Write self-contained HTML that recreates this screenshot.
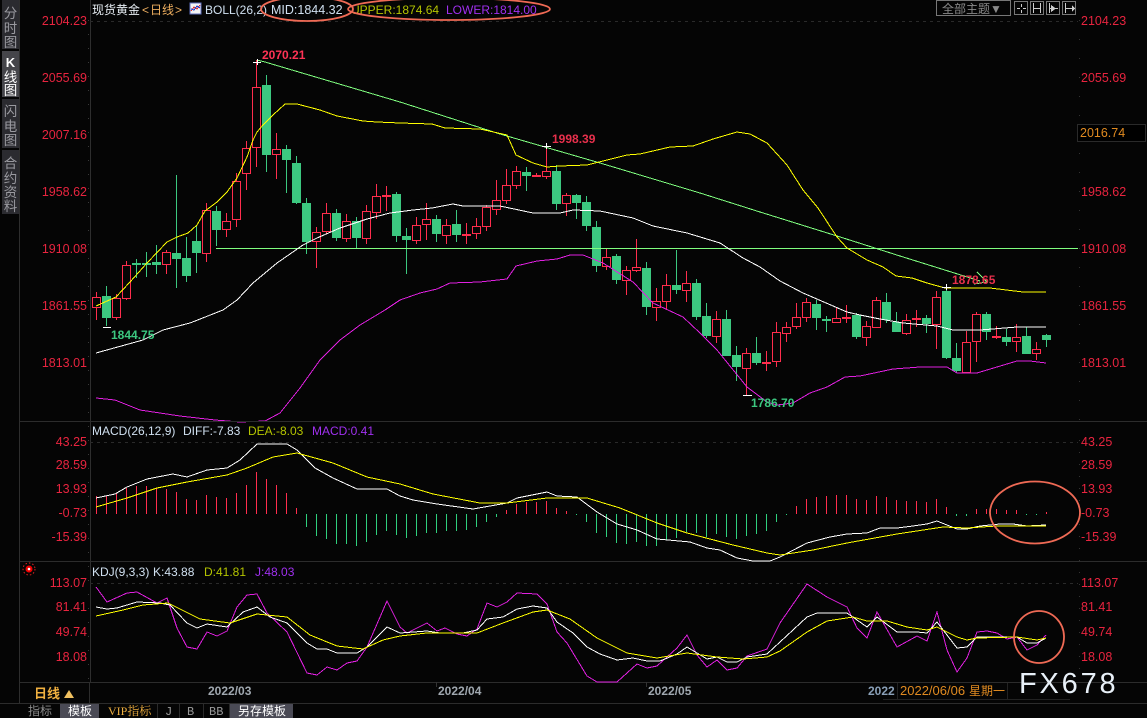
<!DOCTYPE html>
<html lang="zh">
<head>
<meta charset="utf-8">
<title>现货黄金 日线</title>
<style>
html,body{margin:0;padding:0;background:#050505;width:1147px;height:718px;overflow:hidden}
svg{display:block}
text{font-family:"Liberation Sans","Noto Sans CJK SC",sans-serif;font-size:12.5px}
.ax text{fill:#e8243f}
.c{shape-rendering:crispEdges}
</style>
</head>
<body>
<svg width="1147" height="718" viewBox="0 0 1147 718" xmlns="http://www.w3.org/2000/svg">
<rect width="1147" height="718" fill="#050505"/>

<!-- sidebar -->
<g class="c">
<rect x="2" y="0" width="17" height="49" fill="#2b2b30"/>
<rect x="2" y="51" width="17" height="46" fill="#45454a"/>
<rect x="2" y="99" width="17" height="49" fill="#2b2b30"/>
<rect x="2" y="150" width="17" height="64" fill="#2b2b30"/>
<path d="M19.5 0V703M90.5 0V682" stroke="#2e2e2e" fill="none"/>
<path d="M20 421.5H1147M20 561.5H1147M20 682.5H1147M0 703.5H1147M89.5 682V703" stroke="#2c2c2c" fill="none"/>
<path d="M88.5 20V682" stroke="#3a3a3a" stroke-dasharray="1 13" fill="none"/>
<path d="M1079.5 20V420" stroke="#333" stroke-dasharray="1 18" fill="none"/>
<path d="M1079.5 440V680" stroke="#333" stroke-dasharray="1 11" fill="none"/>
<path d="M90 21.5H1078M90 442.5H1078M90 583.5H1078" stroke="#2a2a2a" stroke-dasharray="3 4" fill="none"/>
<path d="M436.5 682V687M646.5 682V687" stroke="#333" fill="none"/>
</g>
<g fill="#9a9aa0" text-anchor="middle">
<text x="10.5" y="18" style="font-size:13.5px">分</text><text x="10.5" y="33" style="font-size:13.5px">时</text><text x="10.5" y="47" style="font-size:13.5px">图</text>
<text x="10.5" y="67" fill="#fff" style="font-size:13px;font-weight:bold">K</text><text x="10.5" y="82" fill="#fff" style="font-size:13.5px">线</text><text x="10.5" y="95" fill="#fff" style="font-size:13.5px">图</text>
<text x="10.5" y="116" style="font-size:13.5px">闪</text><text x="10.5" y="131" style="font-size:13.5px">电</text><text x="10.5" y="145" style="font-size:13.5px">图</text>
<text x="10.5" y="168" style="font-size:13.5px">合</text><text x="10.5" y="183" style="font-size:13.5px">约</text><text x="10.5" y="197" style="font-size:13.5px">资</text><text x="10.5" y="211" style="font-size:13.5px">料</text>
</g>

<!-- candles green -->
<g class="c">
<path stroke="#3cc880" fill="none" d="M106.5 286V326M136.5 259V278M146.5 252V277M156.5 245V274M176.5 175V288M186.5 237V282M196.5 226V273M216.5 206V246M266.5 75V172M286.5 145V193M296.5 156V204M306.5 198V254M336.5 209V241M356.5 217V248M396.5 192V242M406.5 228V274M436.5 215V242M456.5 210V242M526.5 167V191M556.5 165V210M576.5 194V219M586.5 196V231M596.5 221V272M616.5 254V284M646.5 262V315M676.5 250V294M696.5 279V320M706.5 303V338M726.5 310V356M736.5 346V381M756.5 337V365M816.5 300V330M826.5 316V332M856.5 313V339M886.5 293V323M896.5 312V332M926.5 315V333M946.5 287V359M956.5 343V373M986.5 312V340M1006.5 329V346M1026.5 327V354M1046.5 334V347"/>
<path fill="#3cc880" d="M102 296h9v22h-9zM132 263h9v2h-9zM142 263h9v2h-9zM152 262h9v3h-9zM172 253h9v6h-9zM182 258h9v18h-9zM192 241h9v12h-9zM212 211h9v19h-9zM262 85h9v70h-9zM282 149h9v11h-9zM292 163h9v40h-9zM302 203h9v39h-9zM332 213h9v25h-9zM352 221h9v17h-9zM392 194h9v42h-9zM402 236h9v4h-9zM432 219h9v15h-9zM452 224h9v11h-9zM522 172h9v4h-9zM552 171h9v33h-9zM572 195h9v8h-9zM582 202h9v24h-9zM592 227h9v39h-9zM612 256h9v24h-9zM642 268h9v39h-9zM672 285h9v5h-9zM692 283h9v34h-9zM702 316h9v20h-9zM722 319h9v37h-9zM732 355h9v12h-9zM752 353h9v10h-9zM812 304h9v14h-9zM822 319h9v2h-9zM852 315h9v22h-9zM882 302h9v18h-9zM892 322h9v10h-9zM922 318h9v6h-9zM942 291h9v67h-9zM952 358h9v13h-9zM982 314h9v18h-9zM1002 337h9v5h-9zM1022 336h9v18h-9zM1042 335h9v5h-9z"/>

<!-- candles red -->
<path stroke="#ff2d4d" fill="none" d="M96.5 292V320M116.5 294V320M126.5 261V300M166.5 250V274M206.5 203V262M226.5 213V237M236.5 173V227M246.5 141V190M256.5 60V167M276.5 133V179M316.5 227V268M326.5 203V234M346.5 214V242M366.5 205V244M376.5 184V219M386.5 186V211M416.5 217V244M426.5 203V240M446.5 219V244M466.5 223V244M476.5 218V239M486.5 205V231M496.5 180V215M506.5 169V204M516.5 166V189M536.5 173V177M546.5 146V179M566.5 193V216M606.5 249V270M626.5 266V295M636.5 239V272M656.5 288V321M666.5 274V310M686.5 271V302M716.5 311V343M746.5 348V395M766.5 351V371M776.5 322V367M786.5 322V342M796.5 303V329M806.5 298V322M836.5 308V323M846.5 305V323M866.5 321V346M876.5 297V328M906.5 314V335M916.5 310V327M936.5 291V349M966.5 331V372M976.5 312V362M996.5 326V339M1016.5 324V352M1036.5 342V360"/>
<path stroke="#ff2d4d" fill="#050505" d="M92.5 297.5h8v10h-8zM112.5 298.5h8v19h-8zM122.5 265.5h8v33h-8zM162.5 252.5h8v12h-8zM202.5 210.5h8v43h-8zM222.5 221.5h8v8h-8zM232.5 181.5h8v38h-8zM242.5 148.5h8v25h-8zM252.5 87.5h8v60h-8zM272.5 149.5h8v5h-8zM312.5 232.5h8v9h-8zM322.5 213.5h8v18h-8zM342.5 221.5h8v17h-8zM362.5 211.5h8v27h-8zM372.5 196.5h8v16h-8zM382.5 195.5h8v1h-8zM412.5 225.5h8v15h-8zM422.5 219.5h8v5h-8zM442.5 225.5h8v10h-8zM462.5 234.5h8v1h-8zM472.5 226.5h8v7h-8zM482.5 207.5h8v19h-8zM492.5 200.5h8v9h-8zM502.5 185.5h8v15h-8zM512.5 171.5h8v14h-8zM532.5 175.5h8v1h-8zM542.5 171.5h8v5h-8zM562.5 195.5h8v8h-8zM602.5 257.5h8v9h-8zM622.5 270.5h8v10h-8zM632.5 267.5h8v3h-8zM652.5 301.5h8v6h-8zM662.5 285.5h8v16h-8zM682.5 283.5h8v7h-8zM712.5 319.5h8v17h-8zM742.5 353.5h8v15h-8zM762.5 362.5h8v1h-8zM772.5 332.5h8v29h-8zM782.5 327.5h8v6h-8zM792.5 317.5h8v9h-8zM802.5 302.5h8v15h-8zM832.5 318.5h8v4h-8zM842.5 317.5h8v1h-8zM862.5 326.5h8v11h-8zM872.5 300.5h8v27h-8zM902.5 320.5h8v13h-8zM912.5 318.5h8v1h-8zM932.5 297.5h8v27h-8zM962.5 342.5h8v30h-8zM972.5 314.5h8v27h-8zM992.5 336.5h8v1h-8zM1012.5 337.5h8v4h-8zM1032.5 349.5h8v4h-8z"/>

<!-- main lines -->
<path stroke="#80ff80" fill="none" d="M216 248.5H1078"/>
<polyline stroke="#80ff80" fill="none" points="257,60 265,62 400,102 500,134 600,163 700,193 760,212 837,236 900,256 980,281"/>
<path stroke="#80ff80" fill="none" d="M977 272L987 282L974 284"/>
<polyline stroke="#ffff00" fill="none" points="96,306 116,297 130,282 147,263 167,242 177,237 188,233 197,225 205,211 217,202 227,192 237,178 247,157 253,140 257,132 263,125 273,115 285,104 297,104 320,110 337,116 363,121 377,122 400,123 432,124 445,128 480,129 507,135 516,155 533,163 547,167 560,166 587,165 607,160 627,155 640,154 670,147 693,146 713,139 737,132 750,134 767,143 787,165 803,190 818,208 837,237 847,248 867,260 883,267 896,276 912,278 927,283 945,288 990,288 1023,292 1046,292"/>
<polyline stroke="#ffffff" fill="none" points="96,353 143,340 163,330 190,323 223,310 237,300 253,283 277,263 303,245 317,238 340,228 367,219 390,213 413,210 432,208 453,204 463,206 500,206 533,213 560,213 573,210 600,211 633,218 653,226 687,233 720,243 743,258 760,267 780,281 803,293 847,312 860,315 880,319 903,323 937,326 953,330 980,330 1017,327 1046,327"/>
<polyline stroke="#e020e0" fill="none" points="96,398 115,400 140,410 180,416 215,420 240,422 265,421 280,413 300,388 320,360 340,340 360,325 385,310 400,300 420,293 437,289 450,283 480,282 507,279 516,266 537,261 557,259 570,255 583,255 603,263 633,282 653,303 683,317 700,333 717,350 747,387 767,402 777,405 793,403 810,393 827,387 845,377 860,376 893,369 920,367 947,367 957,373 977,373 997,367 1017,361 1030,361 1046,363"/>
<rect x="20" y="421" width="1127" height="1" fill="#2c2c2c"/>

<!-- crosshair marks -->
<path stroke="#fff" fill="none" d="M253 62.5h8M257.5 59v6M542 146.5h9M546.5 143v6M942 287.5h9M946.5 284v6M103 327.5h8M743 395.5h9"/>

<!-- MACD bars -->
<path stroke="#ff2d4d" fill="none" d="M96.5 496V514M106.5 496V514M116.5 493V514M126.5 488V514M136.5 486V514M146.5 486V514M156.5 488V514M166.5 489V514M176.5 492V514M186.5 499V514M196.5 500V514M206.5 495V514M216.5 497V514M226.5 498V514M236.5 493V514M246.5 485V514M256.5 472V514M266.5 479V514M276.5 485V514M286.5 493V514M296.5 508V514M506.5 510V514M516.5 504V514M526.5 502V514M536.5 502V514M546.5 501V514M556.5 508V514M566.5 511V514M796.5 506V514M806.5 499V514M816.5 497V514M826.5 496V514M836.5 495V514M846.5 495V514M856.5 499V514M866.5 500V514M876.5 496V514M886.5 497V514M896.5 500V514M906.5 501V514M916.5 501V514M926.5 502V514M936.5 499V514M946.5 507V514M976.5 509V514M986.5 509V514M996.5 509V514M1006.5 510V514M1016.5 510V514M1046.5 512V514"/>
<path stroke="#2fd07e" fill="none" d="M306.5 514V527M316.5 514V536M326.5 514V539M336.5 514V544M346.5 514V544M356.5 514V546M366.5 514V542M376.5 514V535M386.5 514V531M396.5 514V535M406.5 514V538M416.5 514V536M426.5 514V533M436.5 514V533M446.5 514V531M456.5 514V531M466.5 514V530M476.5 514V527M486.5 514V522M496.5 514V517M576.5 514V515M586.5 514V522M596.5 514V533M606.5 514V537M616.5 514V543M626.5 514V544M636.5 514V542M646.5 514V546M656.5 514V546M666.5 514V540M676.5 514V538M686.5 514V532M696.5 514V533M706.5 514V537M716.5 514V534M726.5 514V537M736.5 514V539M746.5 514V536M756.5 514V534M766.5 514V531M776.5 514V522M786.5 514V515M956.5 514V516M966.5 514V516M1026.5 514V515M1036.5 514V515"/>
<polyline stroke="#ffffff" fill="none" points="96,498 115,494 127,487 147,479 173,474 187,477 207,470 227,468 240,460 257,444 287,444 297,450 315,468 333,478 357,489 387,489 400,496 413,500 437,504 473,509 507,503 517,498 547,492 557,496 577,497 597,512 617,524 637,530 657,539 690,542 707,548 720,550 737,558 753,561 770,561 780,557 807,543 830,537 847,534 867,533 880,528 897,528 913,526 927,524 937,521 957,529 967,529 980,526 1000,524 1013,524 1027,526 1046,525"/>
<polyline stroke="#ffff00" fill="none" points="96,507 127,498 157,488 187,482 227,475 247,468 273,457 297,453 333,463 367,477 400,484 433,494 480,503 507,503 547,498 587,498 620,508 657,523 687,533 733,545 767,553 780,555 813,550 847,543 897,534 943,527 967,528 997,526 1046,526"/>

<!-- KDJ -->
<polyline stroke="#e020e0" fill="none" points="96,587 107,602 127,593 137,592 157,603 167,598 177,628 187,647 197,649 207,632 217,636 227,631 237,607 247,595 257,594 267,613 287,632 307,673 317,675 327,667 337,670 347,663 357,661 367,647 387,601 400,627 407,633 427,623 437,631 445,628 457,634 467,636 477,629 487,603 497,607 507,602 517,593 537,594 547,604 557,632 567,643 587,676 597,682 617,682 637,664 647,668 657,666 677,648 687,635 697,655 707,667 717,660 727,670 737,668 747,656 767,649 780,623 807,584 827,597 847,607 857,628 867,638 877,612 897,647 917,636 927,641 937,612 947,650 957,672 967,658 977,632 987,631 997,633 1007,639 1017,637 1027,650 1037,645 1046,635"/>
<polyline stroke="#ffffff" fill="none" points="96,607 107,609 117,608 137,602 160,603 170,605 187,623 197,628 207,624 227,627 243,612 257,607 270,617 287,623 307,643 317,649 327,649 337,653 357,653 367,647 387,627 400,633 427,631 440,633 463,633 477,630 487,619 503,617 517,609 533,606 547,608 557,622 573,633 587,647 600,654 617,660 633,658 647,661 660,661 677,654 687,647 707,659 717,657 727,662 737,662 747,657 767,654 780,642 807,617 817,613 847,613 867,627 877,617 897,632 917,632 927,633 937,622 957,648 967,647 977,637 997,637 1017,637 1027,643 1037,643 1046,638"/>
<polyline stroke="#ffff00" fill="none" points="96,616 123,610 143,605 168,603 200,619 230,623 257,614 287,617 310,635 337,646 363,649 383,640 400,636 427,633 477,633 503,623 533,612 547,610 570,619 597,638 627,653 657,658 687,653 717,657 743,659 767,657 780,651 807,632 827,621 853,617 867,621 887,621 907,627 927,630 937,627 957,637 967,640 977,638 1017,637 1037,640 1046,638"/>
</g>

<!-- axis labels -->
<g class="ax" text-anchor="end">
<text x="87" y="25">2104.23</text><text x="87" y="82">2055.69</text><text x="87" y="139">2007.16</text><text x="87" y="196">1958.62</text><text x="87" y="253">1910.08</text><text x="87" y="310">1861.55</text><text x="87" y="367">1813.01</text>
<text x="87" y="446">43.25</text><text x="87" y="469">28.59</text><text x="87" y="493">13.93</text><text x="87" y="517">-0.73</text><text x="87" y="541">-15.39</text>
<text x="87" y="587">113.07</text><text x="87" y="611">81.41</text><text x="87" y="636">49.74</text><text x="87" y="661">18.08</text>
</g>
<g class="ax">
<text x="1081" y="25">2104.23</text><text x="1081" y="82">2055.69</text><text x="1081" y="196">1958.62</text><text x="1081" y="253">1910.08</text><text x="1081" y="310">1861.55</text><text x="1081" y="367">1813.01</text>
<text x="1081" y="446">43.25</text><text x="1081" y="469">28.59</text><text x="1081" y="493">13.93</text><text x="1081" y="517">-0.73</text><text x="1081" y="541">-15.39</text>
<text x="1081" y="587">113.07</text><text x="1081" y="611">81.41</text><text x="1081" y="636">49.74</text><text x="1081" y="661">18.08</text>
</g>

<!-- current price box -->
<rect class="c" x="1077.5" y="124.5" width="68" height="17" fill="#000" stroke="#2a2a2a"/>
<text x="1080" y="137" fill="#e08a20">2016.74</text>

<!-- extreme labels -->
<text x="262" y="59" fill="#ff3355" style="font-size:12px;font-weight:bold">2070.21</text>
<text x="552" y="143" fill="#e8304c" style="font-size:12px;font-weight:bold">1998.39</text>
<text x="952" y="284" fill="#e8304c" style="font-size:12px;font-weight:bold">1878.65</text>
<text x="111" y="339" fill="#3cc880" style="font-size:12px;font-weight:bold">1844.75</text>
<text x="751" y="407" fill="#3cc880" style="font-size:12px;font-weight:bold">1786.70</text>

<!-- header -->
<text x="92" y="14" fill="#e8eef4" style="font-size:12px">现货黄金</text>
<text x="142" y="14" fill="#f0b060" style="font-size:12px">&lt;</text>
<text x="150" y="14" fill="#f0b060" style="font-size:12px">日线</text>
<text x="175" y="14" fill="#f0b060" style="font-size:12px">&gt;</text>
<g class="c">
<rect x="190" y="3" width="11" height="11" fill="#f4f4f4" stroke="#6070c0"/>
<path d="M191 11L194 7L197 9L200 5" stroke="#e03030" fill="none"/>
<path d="M191 9L194 10L197 6L200 8" stroke="#2040d0" fill="none"/>
</g>
<text x="205" y="14" fill="#d0e0f0" style="font-size:12px">BOLL(26,2)</text>
<text x="271" y="14" fill="#d0e0f0">MID:1844.32</text>
<text x="351" y="14" fill="#b4c400" style="font-size:12px">UPPER:1874.64</text>
<text x="446" y="14" fill="#a030f0" style="font-size:12px">LOWER:1814.00</text>

<!-- top-right controls -->
<g class="c" fill="none" stroke="#777">
<rect x="936.5" y="0.5" width="74" height="15"/>
<rect x="1014.5" y="1.5" width="13" height="13"/>
<rect x="1030.5" y="1.5" width="13" height="13"/>
<rect x="1046.5" y="1.5" width="13" height="13"/>
<rect x="1062.5" y="1.5" width="13" height="13"/>
<path stroke="#ccc" d="M1021.5 4V7M1021.5 10V13M1017 8.5h3M1023 8.5h3M1033.5 3V13M1040.5 3V13M1033 8.5h8M1049.5 3V13M1050 8.5h8M1065.5 3V13M1066 8.5h8"/>
<path fill="#ccc" stroke="none" d="M1051 5l5 3.500-5 3.500zM1072 5l3 3.500-3 3.500z"/>
</g>
<text x="942" y="13" fill="#8a8a8a" style="font-size:12px">全部主题▼</text>

<!-- MACD / KDJ titles -->
<text x="92" y="435" fill="#d0e0f0" style="font-size:12px">MACD(26,12,9)</text>
<text x="183" y="435" fill="#d0e0f0" style="font-size:12px">DIFF:-7.83</text>
<text x="248" y="435" fill="#b4c400" style="font-size:12px">DEA:-8.03</text>
<text x="312" y="435" fill="#a030f0" style="font-size:12px">MACD:0.41</text>
<text x="92" y="576" fill="#d0e0f0" style="font-size:12px">KDJ(9,3,3)</text>
<text x="153" y="576" fill="#d0e0f0" style="font-size:12px">K:43.88</text>
<text x="204" y="576" fill="#b4c400" style="font-size:12px">D:41.81</text>
<text x="255" y="576" fill="#a030f0" style="font-size:12px">J:48.03</text>

<!-- red dot -->
<circle cx="29" cy="569" r="3.5" fill="#f00000"/>
<circle cx="29" cy="569" r="1.3" fill="#fff"/>
<circle cx="29" cy="569" r="6" fill="none" stroke="#e02020" stroke-dasharray="1.500 2"/>

<!-- bottom date row -->
<text x="34" y="698" fill="#f0b040" style="font-size:13px;font-weight:bold">日线</text>
<path d="M64 698l5-8 5 8z" fill="#f0c060"/>
<text x="208" y="695" fill="#a0a8b0" style="font-size:12px;font-weight:bold">2022/03</text>
<text x="438" y="695" fill="#a0a8b0" style="font-size:12px;font-weight:bold">2022/04</text>
<text x="648" y="695" fill="#a0a8b0" style="font-size:12px;font-weight:bold">2022/05</text>
<text x="868" y="695" fill="#8aa0b8" style="font-size:12px;font-weight:bold">2022</text>
<path class="c" d="M897.500 683V699M1007.500 683V699M883 699.500H1070" stroke="#222" fill="none"/>
<text x="900" y="695" fill="#e08a20" style="font-size:13px">2022/06/06</text>
<text x="969" y="695" fill="#e08a20" style="font-size:12px">星期一</text>
<text x="1019" y="693" fill="#e8f0f8" style="font-size:29px;letter-spacing:2.800px">FX678</text>

<!-- bottom tabs -->
<g class="c">
<rect x="60" y="704" width="39" height="14" fill="#4a4a55"/>
<rect x="230" y="704" width="63" height="14" fill="#4a4a55"/>
<path d="M157.500 704V718M179.500 704V718M203.500 704V718M229.500 704V718" stroke="#2a2a2a" fill="none"/>
</g>
<text x="28" y="715" fill="#8a8a8a" style="font-size:12px">指标</text>
<text x="68" y="715" fill="#ffffff" style="font-size:12px">模板</text>
<text x="108" y="715" fill="#f0b040" style="font-size:12px;font-family:'Liberation Serif','Noto Serif CJK SC',serif">VIP指标</text>
<text x="165" y="715" fill="#999" style="font-size:12px;font-family:'Liberation Mono',monospace">J</text>
<text x="187" y="715" fill="#999" style="font-size:12px;font-family:'Liberation Mono',monospace">B</text>
<text x="209" y="715" fill="#999" style="font-size:12px;font-family:'Liberation Mono',monospace">BB</text>
<text x="238" y="715" fill="#ffffff" style="font-size:12px">另存模板</text>

<!-- hand-drawn ellipses -->
<g fill="none" stroke="#ef6a55" stroke-width="1.800">
<ellipse cx="307" cy="9" rx="46" ry="12"/>
<ellipse cx="449" cy="9" rx="101" ry="11"/>
<ellipse cx="1035" cy="512.500" rx="45" ry="31"/>
<ellipse cx="1039" cy="637" rx="25" ry="26"/>
</g>
</svg>
</body>
</html>
